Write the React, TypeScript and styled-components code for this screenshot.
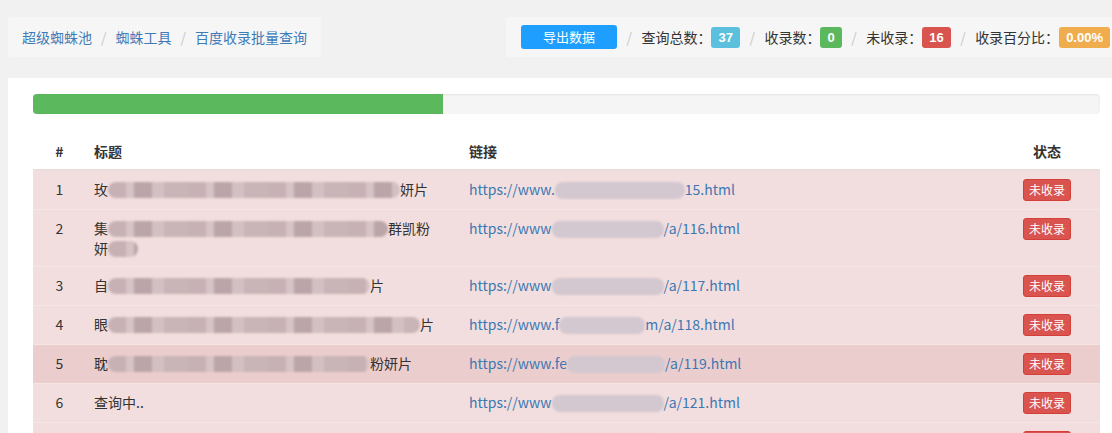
import styled, { createGlobalStyle } from "styled-components";

const GlobalStyle = createGlobalStyle`
  html, body {
    margin: 0;
    padding: 0;
    overflow: hidden;
    background: #f1f1f1;
  }
  body {
    font-family: "Noto Sans CJK SC", "Liberation Sans", sans-serif;
    font-size: 14px;
    line-height: 20px;
    color: #333;
  }
  * {
    box-sizing: border-box;
  }
`;

interface Row {
  id: number;
  title: [string, number, string, string?, number?];
  link: [string, number, string];
  hover?: boolean;
}

const rows: Row[] = [
  { id: 1, title: ["玫", 292, "妍片"], link: ["https://www.", 130, "15.html"] },
  {
    id: 2,
    title: ["集", 280, "群凯粉", "妍", 30],
    link: ["https://www", 112, "/a/116.html"],
  },
  { id: 3, title: ["自", 262, "片"], link: ["https://www", 112, "/a/117.html"] },
  { id: 4, title: ["眼", 312, "片"], link: ["https://www.f", 86, "m/a/118.html"] },
  {
    id: 5,
    title: ["耽", 262, "粉妍片"],
    link: ["https://www.fe", 98, "/a/119.html"],
    hover: true,
  },
  { id: 6, title: ["查询中..", 0, ""], link: ["https://www", 112, "/a/121.html"] },
  { id: 7, title: ["查询中..", 0, ""], link: ["https://www", 112, "/a/122.html"] },
];

export default function App() {
  return (
    <>
      <GlobalStyle />
      <Page>
        <TopBar>
          <Breadcrumb>
            <Crumb>超级蜘蛛池</Crumb>
            <Slash>/</Slash>
            <Crumb>蜘蛛工具</Crumb>
            <Slash>/</Slash>
            <Crumb>百度收录批量查询</Crumb>
          </Breadcrumb>
          <Stats>
            <ExportButton>导出数据</ExportButton>
            <StatSlash>/</StatSlash>
            <StatLabel>查询总数：</StatLabel>
            <Count $bg="#5bc0de">37</Count>
            <StatSlash>/</StatSlash>
            <StatLabel>收录数：</StatLabel>
            <Count $bg="#5cb85c">0</Count>
            <StatSlash>/</StatSlash>
            <StatLabel>未收录：</StatLabel>
            <Count $bg="#d9534f">16</Count>
            <StatSlash>/</StatSlash>
            <StatLabel>收录百分比：</StatLabel>
            <Count $bg="#f0ad4e">0.00%</Count>
          </Stats>
        </TopBar>

        <Panel>
          <Progress>
            <ProgressFill style={{ width: "38.4%" }} />
          </Progress>

          <Table>
            <colgroup>
              <col style={{ width: 53 }} />
              <col style={{ width: 375 }} />
              <col />
              <col style={{ width: 106 }} />
            </colgroup>
            <thead>
              <tr>
                <Th $center>#</Th>
                <Th>标题</Th>
                <Th>链接</Th>
                <Th $center>状态</Th>
              </tr>
            </thead>
            <tbody>
              {rows.map((r) => (
                <Tr key={r.id} $hover={r.hover}>
                  <Td $center>{r.id}</Td>
                  <Td>
                    {r.title[0]}
                    {r.title[1] > 0 && <TitleBlur style={{ width: r.title[1] }} />}
                    {r.title[2]}
                    {r.title[3] && (
                      <>
                        <br />
                        {r.title[3]}
                        <TitleBlur style={{ width: r.title[4] }} />
                      </>
                    )}
                  </Td>
                  <Td>
                    <Link>
                      {r.link[0]}
                      <LinkBlur style={{ width: r.link[1] }} />
                      {r.link[2]}
                    </Link>
                  </Td>
                  <Td $center>
                    <StatusButton>未收录</StatusButton>
                  </Td>
                </Tr>
              ))}
            </tbody>
          </Table>
        </Panel>
      </Page>
    </>
  );
}

const Page = styled.div`
  width: 1125px;
  padding: 17px 0 0 8px;
`;

const TopBar = styled.div`
  display: flex;
  justify-content: space-between;
  align-items: flex-start;
  margin-bottom: 21px;
`;

const Breadcrumb = styled.div`
  display: flex;
  align-items: center;
  height: 40px;
  padding: 0 14px;
  background: #f6f6f6;
  border-radius: 4px;
  white-space: nowrap;
`;

const Crumb = styled.span`
  color: #3f7bb7;
`;

const Slash = styled.span`
  color: #c8c8c8;
  padding: 0 9px;
`;

const StatSlash = styled(Slash)`
  padding: 0 9.5px;
`;

const Stats = styled.div`
  display: flex;
  align-items: center;
  flex-shrink: 0;
  height: 40px;
  padding: 0 15px;
  background: #f6f6f6;
  border-radius: 4px;
  white-space: nowrap;
`;

const ExportButton = styled.button`
  width: 96px;
  height: 24px;
  border: none;
  border-radius: 3px;
  background: #1e9fff;
  color: #fff;
  font-family: inherit;
  font-size: 13px;
  line-height: 24px;
  padding: 0;
`;

const StatLabel = styled.span`
  color: #333;
`;

const Count = styled.span<{ $bg: string }>`
  display: inline-block;
  height: 21px;
  line-height: 21px;
  padding: 0 7px;
  border-radius: 3px;
  background: ${(p) => p.$bg};
  color: #fff;
  font-family: "Liberation Sans", sans-serif;
  font-size: 13px;
  font-weight: 700;
`;

const Panel = styled.div`
  background: #fff;
  padding: 16px 25px 0 25px;
  min-height: 400px;
`;

const Progress = styled.div`
  height: 20px;
  border-radius: 4px;
  background: #f5f5f5;
  box-shadow: inset 0 1px 2px rgba(0, 0, 0, 0.08);
  overflow: hidden;
  margin-bottom: 19px;
`;

const ProgressFill = styled.div`
  height: 100%;
  background: #5cb85c;
`;

const Table = styled.table`
  width: 100%;
  border-collapse: collapse;
  table-layout: fixed;
`;

const Th = styled.th<{ $center?: boolean }>`
  padding: 8px;
  text-align: ${(p) => (p.$center ? "center" : "left")};
  font-weight: 700;
  color: #333;
  border-bottom: 2px solid #ecdcdc;
`;

const Tr = styled.tr<{ $hover?: boolean }>`
  background: ${(p) => (p.$hover ? "#ebcdcd" : "#f2dede")};
`;

const Td = styled.td<{ $center?: boolean }>`
  padding: 8px;
  vertical-align: top;
  text-align: ${(p) => (p.$center ? "center" : "left")};
  border-top: 1px solid #f5e6e6;
  color: #333;
`;

const TitleBlur = styled.span`
  display: inline-block;
  height: 16px;
  vertical-align: -3px;
  border-radius: 8px;
  filter: blur(0.8px);
  background: repeating-linear-gradient(
    90deg,
    #c7b1b4 0 18px,
    #d6c3c5 18px 26px,
    #bca5a9 26px 44px,
    #d3c0c2 44px 56px,
    #c9b4b7 56px 80px
  );
`;

const Link = styled.span`
  color: #3b78b4;
`;

const LinkBlur = styled.span`
  display: inline-block;
  height: 17px;
  vertical-align: -4px;
  border-radius: 8px;
  filter: blur(0.8px);
  background: #d3c7d0;
`;

const StatusButton = styled.span`
  display: inline-block;
  height: 22px;
  padding: 0 5px;
  border: 1px solid #d43f3a;
  border-radius: 3px;
  background: #d9534f;
  color: #fff;
  font-size: 12px;
  line-height: 20px;
  vertical-align: top;
`;
